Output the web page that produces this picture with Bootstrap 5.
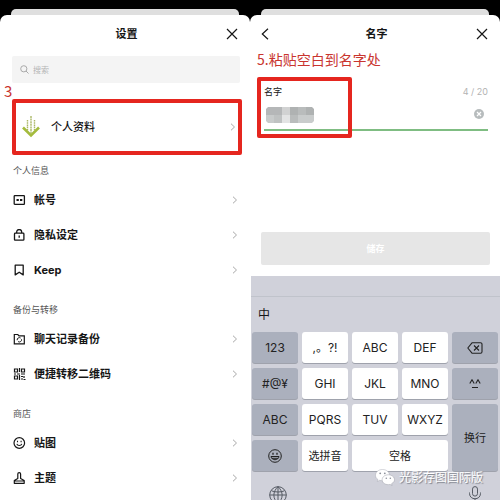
<!DOCTYPE html>
<html lang="zh-CN">
<head>
<meta charset="utf-8">
<meta name="viewport" content="width=device-width, initial-scale=1">
<title>设置</title>
<link href="https://cdn.jsdelivr.net/npm/bootstrap@5.3.0/dist/css/bootstrap.min.css" rel="stylesheet">
<style>
body { font-family: Inter, "Noto Sans CJK SC", sans-serif; font-size: 11px; line-height: 16px; color: #161616; background: #fff; }
svg { display: block; flex: none; fill: none; stroke: currentColor; }
.backdrop { background: #000; padding: 9px 11px 0; height: 22px; }
.peek { background: #dfdfdf; height: 13px; border-radius: 5px 5px 0 0; }
.sheet { background: #fff; border-radius: 7px 7px 0 0; margin-top: -7px; }
.bar { height: 41px; padding: 0 12px 4px 11px; }
.bar h1 { font-size: 11px; line-height: 16px; font-weight: 700; }
.bare { background: none; border: 0; padding: 0; color: inherit; }
.search { background: #f4f4f4; height: 27px; margin: 0 10px 0 12px; padding: 0 8px; color: #a9a9a9; border-radius: 2px; }
.search input { font-size: 8px; line-height: 16px; }
.search input::placeholder { color: #b4b4b4; opacity: 1; }
.note { color: #c9352f; font-family: "Noto Sans CJK SC", sans-serif; }
.step { font-size: 15px; padding-left: 4px; }
.profile { height: 56px; margin: 0 8px 0 12px; padding: 0 2px 0 6px; border: 4px solid #e5261f; border-radius: 2px; font-weight: 500; }
.profile span { margin-left: 11px; }
.group { font-size: 9px; line-height: 14px; padding: 9px 13px 4px; color: #555; font-weight: 400; }
.later { margin-top: 7px; }
.entry { height: 35px; padding: 0 12px 0 13px; font-weight: 700; gap: 8px; }
.chev { color: #a8a8a8; margin-left: auto; }
.headline { font-size: 14px; line-height: 20px; padding: 0 7px; margin-top: -7px; }
.namefield { margin: 15px 12px 0 14px; height: 47px; border-bottom: 2px solid #7fbd82; font-size: 9px; }
.namefield input { height: 20px; }
.count { color: #b3b3b3; }
.frame { left: -7px; top: -7px; width: 95px; height: 61px; border: 4px solid #e5261f; border-radius: 2px; pointer-events: none; }
.mosaic { left: 2px; top: 23px; }
.save { height: 33px; margin: 101px 10px 0 11px; background: #e6e6e6; color: #fff; font-size: 9px; font-weight: 700; border-radius: 2px; }
.keyboard { background: #d0d1da; margin: 11px 0 0 1px; min-height: 224px; }
.strip { height: 21px; border-bottom: 1px solid #c0c3cb; }
.cand { font-size: 12px; height: 35px; padding: 0 7px; }
.keys { display: grid; grid-template-columns: repeat(5, 1fr); grid-auto-rows: 31px; gap: 5px 4px; padding: 0 2px 0 1px; }
.key { background: #fff; border: 0; border-radius: 3px; padding: 0; box-shadow: 0 1px 0 #9fa2ac; font-size: 12px; color: #222; }
.dim { background: #abb0bd; }
.han { font-size: 11px; }
.tall { grid-column: 5; grid-row: 3 / span 2; }
.space { grid-column: span 2; }
.base { padding: 15px 18px 0; color: #555a63; }
.brandmark { right: 17px; bottom: 14px; color: #fff; font-size: 12px; text-shadow: 1px 1px 1px #777b85; gap: 4px; }
</style>
<script src="https://cdn.jsdelivr.net/npm/bootstrap@5.3.0/dist/js/bootstrap.bundle.min.js"></script>
</head>
<body>
<svg class="d-none">
  <symbol id="close" viewBox="0 0 12 12"><path d="M1 1l10 10M11 1L1 11" stroke-width="1.2"/></symbol>
  <symbol id="chev" viewBox="0 0 6 8"><path d="M1 .7l3.500 3.300L1 7.300" stroke-width="1"/></symbol>
</svg>
<main class="row g-0">
  <section class="col-6">
    <div class="backdrop"><div class="peek"></div></div>
    <div class="sheet">
      <header class="bar d-flex align-items-center justify-content-between">
        <span class="px-2"></span>
        <h1 class="m-0">设置</h1>
        <button class="bare" aria-label="关闭"><svg width="12" height="12"><use href="#close"/></svg></button>
      </header>
      <label class="search d-flex align-items-center gap-1">
        <svg width="9" height="9" viewBox="0 0 9 9"><circle cx="3.800" cy="3.800" r="3.100"/><path d="M6 6l2.500 2.500"/></svg>
        <input class="bare w-100" type="search" placeholder="搜索" aria-label="搜索">
      </label>
      <div class="note step">3</div>
      <a href="#" class="profile d-flex align-items-center text-reset text-decoration-none">
        <svg width="18" height="22" viewBox="0 0 18 22"><g stroke="#aab765" stroke-width="1.400"><path d="M9 0v19" stroke-dasharray="2 .6"/><path d="M5.500 4v12M12.500 4v12" stroke-dasharray="1.500 .7"/></g><path d="M1 11.500l8 8 8-8" stroke="#a4bb3d" stroke-width="2.600"/></svg>
        <span>个人资料</span><svg class="chev" width="6" height="8"><use href="#chev"/></svg>
      </a>
      <h2 class="group m-0">个人信息</h2>
      <nav>
        <a href="#" class="entry d-flex align-items-center text-reset text-decoration-none">
          <svg width="13" height="12" viewBox="0 0 13 12"><rect x="1.200" y="1.700" width="10.200" height="8.600" rx=".6" stroke-width="1.300"/><path d="M3.500 6h2.300M7 6h2.300" stroke-width="2.200"/></svg>
          帐号<svg class="chev" width="6" height="8"><use href="#chev"/></svg></a>
        <a href="#" class="entry d-flex align-items-center text-reset text-decoration-none">
          <svg width="13" height="12" viewBox="0 0 13 12"><rect x="1.500" y="4.200" width="9.400" height="7" rx=".8" stroke-width="1.300"/><path d="M3.700 4V3a2.500 2.500 0 0 1 5 0v1M6.200 6.500v2.300" stroke-width="1.300"/></svg>
          隐私设定<svg class="chev" width="6" height="8"><use href="#chev"/></svg></a>
        <a href="#" class="entry d-flex align-items-center text-reset text-decoration-none">
          <svg width="13" height="12" viewBox="0 0 13 12"><path d="M2.200 1.200h8v9.700L6.200 8.200l-4 2.700z" stroke-width="1.300" stroke-linejoin="round"/></svg>
          Keep<svg class="chev" width="6" height="8"><use href="#chev"/></svg></a>
      </nav>
      <h2 class="group later mb-0">备份与转移</h2>
      <nav>
        <a href="#" class="entry d-flex align-items-center text-reset text-decoration-none">
          <svg width="13" height="12" viewBox="0 0 13 12"><path d="M1.300 10.800V1.500h3.500l1.200 1.300h5.300v8z" stroke-width="1.200"/><path d="M4.200 7.200A2.200 2.200 0 0 1 7.600 5M8.500 6.300A2.200 2.200 0 0 1 5.100 8.600" stroke-width="1"/></svg>
          聊天记录备份<svg class="chev" width="6" height="8"><use href="#chev"/></svg></a>
        <a href="#" class="entry d-flex align-items-center text-reset text-decoration-none">
          <svg width="13" height="12" viewBox="0 0 13 12"><path d="M1.500 1h3v3h-3zM8.500 1h3v3h-3zM1.500 8h3v3h-3z" stroke-width="1.200"/><path d="M6.500 0v4M1 6h2M4 6h3M8 6h4M6.500 7v5M8 8.500h2M11 8v2M8 11h2M10.500 11.500h2" stroke-width="1.200"/></svg>
          便捷转移二维码<svg class="chev" width="6" height="8"><use href="#chev"/></svg></a>
      </nav>
      <h2 class="group later mb-0">商店</h2>
      <nav>
        <a href="#" class="entry d-flex align-items-center text-reset text-decoration-none">
          <svg width="13" height="12" viewBox="0 0 13 12"><circle cx="6.300" cy="6" r="5.300" stroke-width="1.200"/><path d="M4.500 3.800v1.500M8.100 3.800v1.500M3.800 6.800c.7 2.200 4.300 2.200 5 0" stroke-width="1.100"/></svg>
          贴图<svg class="chev" width="6" height="8"><use href="#chev"/></svg></a>
        <a href="#" class="entry d-flex align-items-center text-reset text-decoration-none">
          <svg width="13" height="12" viewBox="0 0 13 12"><path d="M1.300 11.300V8.500L4.800 6.500V2a1.400 1.400 0 0 1 2.800 0v4.500l3.600 2v2.800zM1.300 9h9.900" stroke-width="1.200" stroke-linejoin="round"/></svg>
          主题<svg class="chev" width="6" height="8"><use href="#chev"/></svg></a>
      </nav>
    </div>
  </section>

  <section class="col-6 position-relative">
    <div class="backdrop"><div class="peek"></div></div>
    <div class="sheet">
      <header class="bar d-flex align-items-center justify-content-between">
        <button class="bare" aria-label="返回"><svg width="16" height="12" viewBox="0 0 16 12"><path d="M7 .7L1.300 6 7 11.300" stroke-width="1.200"/></svg></button>
        <h1 class="m-0">名字</h1>
        <button class="bare" aria-label="关闭"><svg width="12" height="12"><use href="#close"/></svg></button>
      </header>
      <p class="note headline mb-0">5.粘贴空白到名字处</p>
      <div class="namefield position-relative">
        <div class="d-flex justify-content-between"><label for="name">名字</label><span class="count">4 / 20</span></div>
        <div class="d-flex align-items-center pt-1">
          <input id="name" class="bare flex-grow-1" type="text">
          <button class="bare me-1" aria-label="清除"><svg width="10" height="10" viewBox="0 0 10 10"><circle cx="5" cy="5" r="5" fill="#b7bcbd" stroke="none"/><path d="M3 3l4 4M7 3L3 7" stroke="#fff" stroke-width="1.200"/></svg></button>
        </div>
        <svg class="mosaic position-absolute" width="48" height="16" viewBox="0 0 48 16"><g stroke="none"><path fill="#b5b7b8" d="M2 0h14v8H0V2z"/><path fill="#c8cbcb" d="M0 8h8v8H2l-2-2z"/><path fill="#bfc2c2" d="M8 8h8v8H8z"/><path fill="#d1d2d2" d="M16 0h8v8h-8z"/><path fill="#e3e4e4" d="M16 8h8v8h-8z"/><path fill="#afb2b2" d="M24 0h8v8h-8zM40 0h6l2 2v6h-8z"/><path fill="#b9bcbc" d="M32 0h8v8h-8zM24 8h8v8h-8z"/><path fill="#c9cccc" d="M32 8h16v6l-2 2H32z"/></g></svg>
        <div class="frame position-absolute"></div>
      </div>
      <div class="d-grid"><button class="save bare">储存</button></div>
      <div class="keyboard">
        <div class="strip"></div>
        <div class="cand d-flex align-items-center">中</div>
        <div class="keys">
          <button class="key dim">123</button><button class="key">,。?!</button><button class="key">ABC</button><button class="key">DEF</button>
          <button class="key dim d-flex align-items-center justify-content-center" aria-label="删除"><svg width="16" height="12" viewBox="0 0 16 12"><path d="M5 .8h8.500a1.500 1.500 0 0 1 1.500 1.500v7.400a1.500 1.500 0 0 1-1.500 1.500H5L.8 6zM7 3.500l5 5M12 3.500l-5 5" stroke-linejoin="round" stroke-width="1.100"/></svg></button>
          <button class="key dim">#@¥</button><button class="key">GHI</button><button class="key">JKL</button><button class="key">MNO</button>
          <button class="key dim d-flex align-items-center justify-content-center" aria-label="颜文字"><svg width="12" height="10" viewBox="0 0 12 10"><path d="M.8 4.500L3 .8l2.200 3.700M6.800 4.500L9 .8l2.200 3.700M3 8.500h6" stroke-width="1.100"/></svg></button>
          <button class="key dim">ABC</button><button class="key">PQRS</button><button class="key">TUV</button><button class="key">WXYZ</button>
          <button class="key dim han tall">换行</button>
          <button class="key dim d-flex align-items-center justify-content-center" aria-label="表情"><svg width="14" height="14" viewBox="0 0 14 14"><circle cx="7" cy="7" r="6.300"/><path d="M5 3.700v2M9 3.700v2" stroke-width="1.300"/><path d="M3 7.500h8c-.4 4.300-7.600 4.300-8 0zM4 9.300h6"/></svg></button>
          <button class="key han">选拼音</button><button class="key han space">空格</button>
        </div>
        <div class="base d-flex justify-content-between">
          <svg width="18" height="14" viewBox="0 0 18 14"><circle cx="9" cy="9" r="8.300"/><path d="M9 .7v14M.7 9h16.600M2.500 4.800c3.500 1.600 9.500 1.600 13 0M9 .7c-5.500 5-5.500 12 0 16.600M9 .7c5.500 5 5.500 12 0 16.600"/></svg>
          <svg width="14" height="14" viewBox="0 0 14 14"><rect x="4.500" y=".6" width="5" height="9.500" rx="2.500"/><path d="M1.500 6.500v1c0 7 11 7 11 0v-1M7 12.800V15"/></svg>
        </div>
      </div>
    </div>
    <div class="brandmark position-absolute d-flex align-items-center">
      <svg width="20" height="17" viewBox="0 0 20 17"><path fill="#fff" stroke="#9a9da6" stroke-width=".4" d="M7.500.5C3.500.5.5 3 .5 6.200c0 1.800 1 3.300 2.400 4.300l-.6 2 2.300-1.200c4.800 1.500 9.900-.9 9.900-5.100C14.500 3 11.500.5 7.500.5z"/><path fill="#fff" stroke="#9a9da6" stroke-width=".5" d="M13.300 5.800c-3.500 0-6.200 2.200-6.200 5 0 3.300 3.900 5.600 8 4.600l2 1.100-.5-1.800c1.800-1 2.900-2.400 2.900-3.900 0-2.800-2.700-5-6.200-5z"/><g fill="#8c909a" stroke="none"><circle cx="5.200" cy="4.300" r=".9"/><circle cx="9.800" cy="4.300" r=".9"/><circle cx="11.300" cy="9.300" r=".8"/><circle cx="15.300" cy="9.300" r=".8"/></g></svg>
      <span>光影存图国际版</span>
    </div>
  </section>
</main>
</body>
</html>
